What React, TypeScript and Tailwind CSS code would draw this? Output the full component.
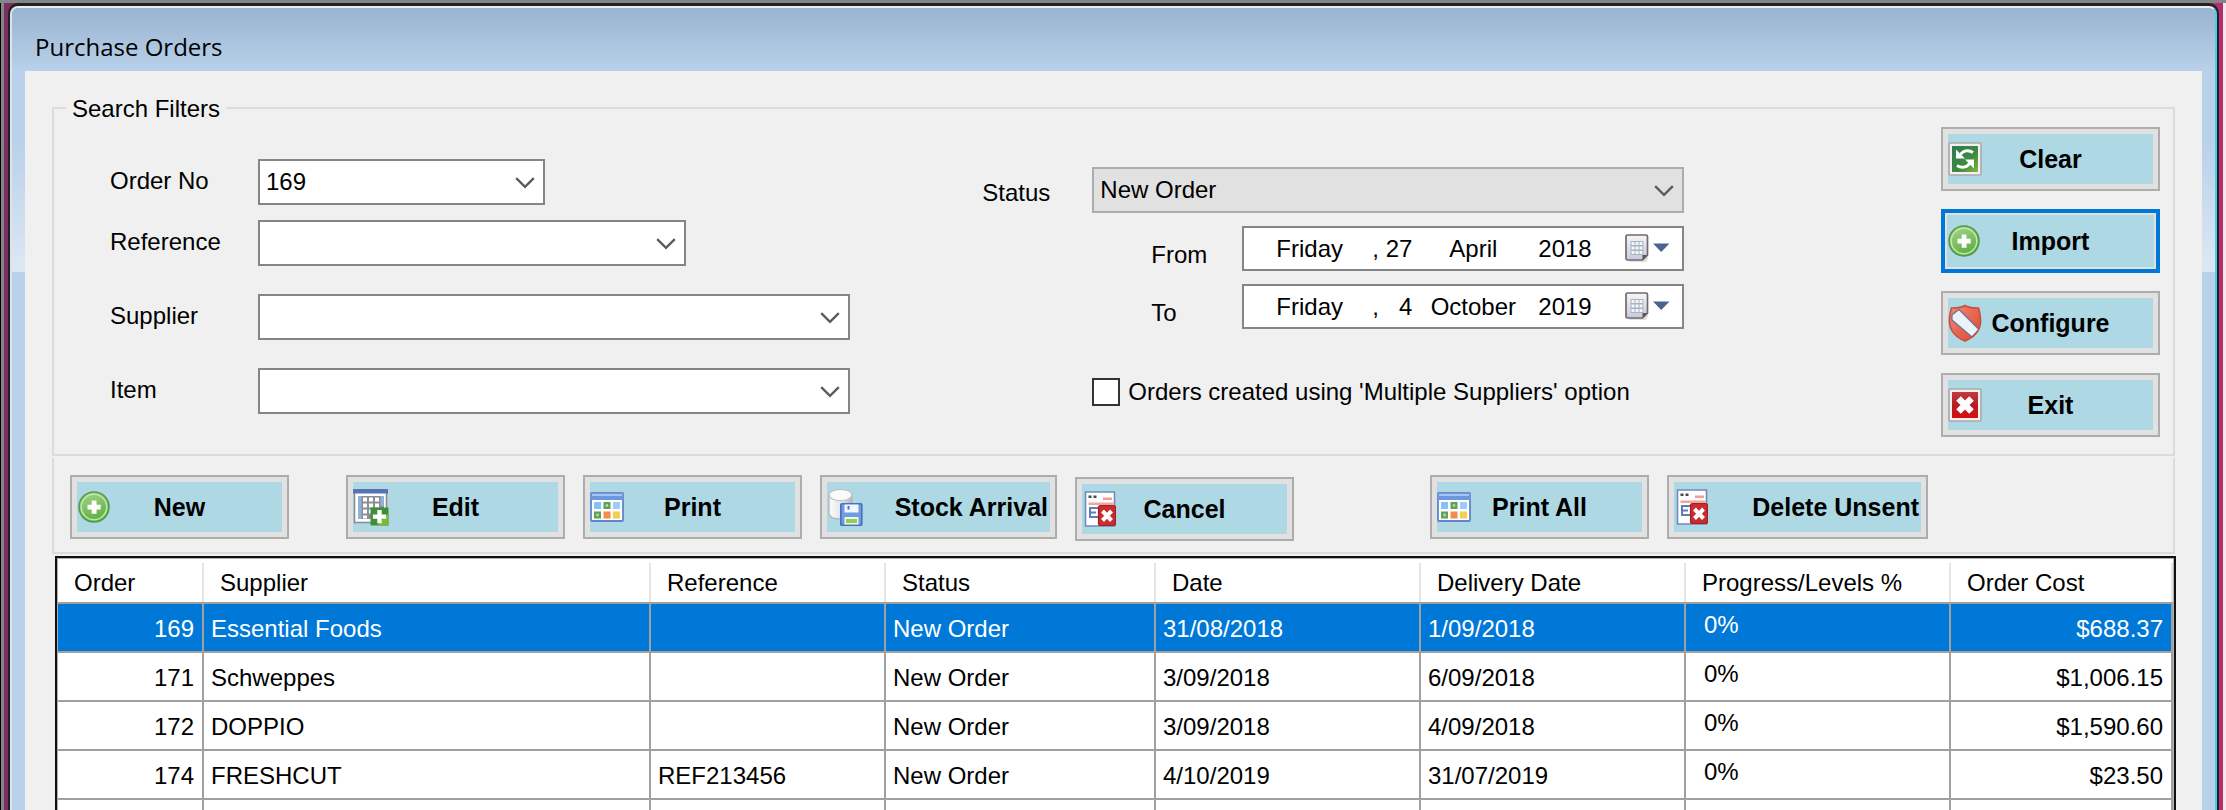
import { useId, type ReactNode } from "react";

/* ---------- icons ---------- */

function Chevron() {
  return (
    <svg width="20" height="12" viewBox="0 0 20 12" fill="none" stroke="#5c5c5c" strokeWidth="2.4" aria-hidden="true">
      <path d="M1.2 1.2 10 9.8 18.8 1.2" />
    </svg>
  );
}

function PlusIcon() {
  return (
    <svg width="34" height="34" viewBox="0 0 34 34" aria-hidden="true">
      <defs>
        <linearGradient id="plusFill" x1="0" y1="0" x2="0.4" y2="1">
          <stop offset="0" stopColor="#a9d68d" />
          <stop offset="1" stopColor="#5fb045" />
        </linearGradient>
      </defs>
      <circle cx="17" cy="17" r="15" fill="url(#plusFill)" stroke="#53994a" strokeWidth="1.5" />
      <circle cx="17" cy="17" r="12.8" fill="none" stroke="#bfe5a8" strokeWidth="1.5" />
      <path d="M14.7 10.5h4.8v4.2h4.2v4.8h-4.2v4.2h-4.8v-4.2h-4.2v-4.8h4.2z" fill="#fff" />
    </svg>
  );
}

function RefreshIcon() {
  return (
    <svg width="34" height="34" viewBox="0 0 34 34" aria-hidden="true">
      <defs>
        <linearGradient id="refreshFill" x1="0" y1="0" x2="1" y2="1">
          <stop offset="0" stopColor="#2f7a50" />
          <stop offset="0.6" stopColor="#3f8a40" />
          <stop offset="1" stopColor="#7fb83c" />
        </linearGradient>
      </defs>
      <rect x="1" y="1" width="32" height="32" rx="1.5" fill="#f1f1f1" stroke="#a9a9a9" strokeWidth="1.6" />
      <rect x="4" y="4" width="26" height="26" fill="url(#refreshFill)" />
      <path d="M12.500 12.500C15 8.500 20.500 7.500 25 10.500" fill="none" stroke="#fff" strokeWidth="3" />
      <path d="M8 7.500v9h9z" fill="#fff" />
      <path d="M21.500 21.500C19 25.500 13.500 26.500 9 23.500" fill="none" stroke="#fff" strokeWidth="3" />
      <path d="M26 26.500v-9h-9z" fill="#fff" />
    </svg>
  );
}

function ShieldIcon() {
  return (
    <svg width="34" height="38" viewBox="0 0 34 38" aria-hidden="true">
      <defs>
        <linearGradient id="shieldFill" x1="0" y1="0" x2="1" y2="1">
          <stop offset="0" stopColor="#f58a78" />
          <stop offset="1" stopColor="#d9452f" />
        </linearGradient>
        <clipPath id="shieldClip">
          <path d="M17 1.500c4 2.600 9 2.600 13.500 2.500 1.500 5 2.500 9 2 15-.6 8-7 15-15.500 18C8.500 34 2.100 27 1.500 19 1 13 2 9 3.500 4 8 4.100 13 4.100 17 1.500z" />
        </clipPath>
      </defs>
      <g clipPath="url(#shieldClip)">
        <rect width="34" height="38" fill="url(#shieldFill)" />
        <path d="M4 16V11L11 5.500 31 25.500 24 33z" fill="#eaf2fa" stroke="#6d6f96" strokeWidth="1.2" />
      </g>
      <path
        d="M17 1.500c4 2.600 9 2.600 13.500 2.500 1.500 5 2.500 9 2 15-.6 8-7 15-15.500 18C8.500 34 2.100 27 1.500 19 1 13 2 9 3.500 4 8 4.100 13 4.100 17 1.500z"
        fill="none"
        stroke="#c4503f"
        strokeWidth="1.5"
      />
    </svg>
  );
}

function ExitIcon() {
  return (
    <svg width="34" height="34" viewBox="0 0 34 34" aria-hidden="true">
      <defs>
        <linearGradient id="exitFill" x1="0" y1="0" x2="0" y2="1">
          <stop offset="0" stopColor="#c23a40" />
          <stop offset="0.5" stopColor="#b51d22" />
          <stop offset="1" stopColor="#d80f10" />
        </linearGradient>
      </defs>
      <rect x="1" y="1" width="32" height="32" rx="1.5" fill="#f1f1f1" stroke="#a9a9a9" strokeWidth="1.6" />
      <rect x="4" y="4" width="26" height="26" fill="url(#exitFill)" />
      <path d="m10.5 10.5 13 13M23.5 10.5l-13 13" stroke="#fff" strokeWidth="6.5" />
    </svg>
  );
}

function GridAddIcon() {
  return (
    <svg width="36" height="38" viewBox="0 0 36 38" aria-hidden="true">
      <rect x="1.5" y="2.5" width="32" height="32" fill="#fff" stroke="#8e8e8e" strokeWidth="1.6" />
      <rect x="0" y="1" width="35" height="4.5" fill="#5573b5" />
      <path d="M5 8h26v23H5z" fill="#8a8f96" />
      <path d="M10 9.500h4v4h-4zM16 9.500h4v4h-4zM22 9.500h4v4h-4zM10 15.500h4v4h-4zM16 15.500h4v4h-4zM22 15.500h4v4h-4zM10 21.500h4v4h-4zM16 21.500h4v4h-4zM10 27.500h4v3h-4z" fill="#fff" />
      <path d="M5 8h3.500v23H5zM27.500 8H31v10h-3.500z" fill="#92b1dc" />
      <rect x="17.5" y="19.5" width="18" height="18" fill="#3f8f3a" />
      <path d="M35.500 25v12.500H24z" fill="#7cb83a" />
      <path d="M24.300 22h4.400v4.400h4.400v4.400h-4.400v4.400h-4.400v-4.400h-4.400v-4.400h4.400z" fill="#fff" />
    </svg>
  );
}

function CalendarTilesIcon() {
  return (
    <svg width="34" height="30" viewBox="0 0 34 30" aria-hidden="true">
      <rect x="1" y="1" width="32" height="28" rx="1" fill="#fdfdfe" stroke="#5f86c6" strokeWidth="1.8" />
      <rect x="0.5" y="0.5" width="33" height="7.5" fill="#6c97da" />
      <rect x="2" y="2" width="30" height="2" fill="#a7c5ef" />
      <path d="M4 10h7v7H4z" fill="#86c0f8" />
      <path d="M13.500 10h7v7h-7z" fill="#5ba257" />
      <path d="M23 10h7v7h-7z" fill="#9bccf8" />
      <path d="M4 19.500h7v7H4z" fill="#5ba257" />
      <path d="M13.500 19.500h7v7h-7z" fill="#f58b4c" />
      <path d="M23 19.500h7v7h-7z" fill="#f2ce55" />
      <path d="M15.800 12.300h2.400v2.400h-2.400zM6.300 21.800h2.400v2.400H6.300z" fill="#b7dcae" />
    </svg>
  );
}

function DatabaseSaveIcon() {
  return (
    <svg width="36" height="38" viewBox="0 0 36 38" aria-hidden="true">
      <defs>
        <linearGradient id="dbFill" x1="0" y1="0" x2="1" y2="0">
          <stop offset="0" stopColor="#fdfdfd" />
          <stop offset="0.55" stopColor="#e3e4e6" />
          <stop offset="1" stopColor="#b2b5ba" />
        </linearGradient>
      </defs>
      <path d="M2 7v18c0 4 5 6 11.500 6S25 29 25 25V7z" fill="url(#dbFill)" stroke="#b4b6ba" strokeWidth="1.3" />
      <ellipse cx="13.5" cy="7" rx="11.5" ry="5.6" fill="#fafafa" stroke="#c0c2c6" strokeWidth="1.3" />
      <rect x="13.8" y="15.800" width="21" height="21.500" rx="1" fill="#6f9be4" stroke="#4670c0" strokeWidth="1.6" />
      <rect x="17.500" y="16.500" width="14" height="8" fill="#f1f5fd" />
      <path d="M20.500 18h2v3.500h-2z" fill="#4670c0" />
      <rect x="17.500" y="29" width="14" height="7.500" fill="#eef7e2" />
      <path d="M19 31h11v4H19z" fill="#93cf4e" />
    </svg>
  );
}

function FormDeleteIcon() {
  return (
    <svg width="34" height="36" viewBox="0 0 34 36" aria-hidden="true">
      <path d="M3.500 1h29v34h-29z" fill="#fff" stroke="#6f8bbd" strokeWidth="1.6" />
      <path d="M6.500 4.500h3V7h-3zM11.500 4.500h3V7h-3z" fill="#4a4a4a" />
      <path d="M21 6.500h9V9h-9z" fill="#f29a94" />
      <path d="M6.500 11.500h25V14h-25z" fill="#f4a39d" />
      <path d="M7 16h2v11H7zM9 16h7v2H9zM9 20.500h5v2H9zM9 25h7v2H9z" fill="#5d7db6" />
      <rect x="16.500" y="14.500" width="17" height="20" rx="2" fill="#c92c2e" stroke="#a31f23" strokeWidth="1.2" />
      <path d="m20.500 20 9 9.500M29.500 20l-9 9.500" stroke="#fff" strokeWidth="4" />
    </svg>
  );
}

function DatePickerIcon() {
  return (
    <svg width="46" height="32" viewBox="0 0 46 32" aria-hidden="true">
      <defs>
        <linearGradient id="pageFill" x1="0" y1="0" x2="0" y2="1">
          <stop offset="0" stopColor="#f7f6f8" />
          <stop offset="1" stopColor="#c3cbe0" />
        </linearGradient>
      </defs>
      <path d="M5 29h17l2-3v-3H5z" fill="#000" opacity="0.12" />
      <path d="M3.500 2H22q1.500 0 1.500 1.500V22l-5 5h-15Q2 27 2 25.500v-22Q2 2 3.500 2z" fill="url(#pageFill)" stroke="#75686a" strokeWidth="1.7" />
      <path d="M6.500 8h13v14h-13z" fill="#aab2c0" />
      <path d="M7.500 9h3v3h-3zM11.500 9h3v3h-3zM15.500 9h3v3h-3zM7.500 13.500h3v3h-3zM11.500 13.500h3v3h-3zM15.500 13.500h3v3h-3zM7.500 18h3v3h-3zM11.500 18h3v3h-3zM15.500 18h3v3h-3z" fill="#f3f6fb" />
      <path d="M18.500 27v-5h5z" fill="#5d5556" />
      <path d="M29 10.500h16.500L37.200 19z" fill="#4a6491" />
    </svg>
  );
}

/* ---------- controls ---------- */

const TEXT = "font-['Liberation_Sans',Arial,sans-serif] text-[24px] leading-8";

function ActionButton({
  icon,
  children,
  width = "w-[219px]",
  align = "justify-self-center",
  focused = false,
}: {
  icon: ReactNode;
  children: ReactNode;
  width?: string;
  align?: string;
  focused?: boolean;
}) {
  return (
    <button
      type="button"
      className={`h-16 shrink-0 bg-[#e1e1e1] ${width} ${
        focused ? "border-4 border-[#0078d7] p-[2px]" : "border-2 border-[#adadad] p-[5px]"
      }`}
    >
      <span className="grid h-full grid-cols-1 items-center bg-[#add8e4]">
        <span className="col-start-1 row-start-1 justify-self-start">{icon}</span>
        <span className={`col-start-1 row-start-1 whitespace-nowrap text-[25px] leading-7 font-bold ${align}`}>
          {children}
        </span>
      </span>
    </button>
  );
}

function Combo({
  id,
  value,
  width,
  disabledLook = false,
}: {
  id: string;
  value: string;
  width: string;
  disabledLook?: boolean;
}) {
  return (
    <div className={`relative h-[46px] ${width}`}>
      <select
        id={id}
        defaultValue={value}
        className={`size-full appearance-none border-2 px-[6px] ${TEXT} ${
          disabledLook ? "border-[#adadad] bg-[#e1e1e1]" : "border-[#858585] bg-white"
        }`}
      >
        <option>{value}</option>
      </select>
      <span className="pointer-events-none absolute top-[18px] right-[10px]">
        <Chevron />
      </span>
    </div>
  );
}

function FilterRow({ label, value = "", width }: { label: string; value?: string; width: string }) {
  const id = useId();
  return (
    <div className="flex items-center">
      <label htmlFor={id} className="w-[148px] pb-[2px]">
        {label}
      </label>
      <Combo id={id} value={value} width={width} />
    </div>
  );
}

function DateRow({ label, day, month, year }: { label: string; day: string; month: string; year: string }) {
  const id = useId();
  return (
    <div className="flex items-center justify-end">
      <label htmlFor={id} className="w-[91px] pt-3">
        {label}
      </label>
      <div className="flex h-[45px] w-[442px] items-center border-2 border-[#858585] bg-white pl-8">
        <input aria-label={`${label} weekday`} defaultValue="Friday" className="w-24 bg-transparent" />
        <span className="w-2">,</span>
        <input id={id} defaultValue={day} className="w-8 bg-transparent text-right" />
        <input aria-label={`${label} month`} defaultValue={month} className="w-[122px] bg-transparent text-center" />
        <input aria-label={`${label} year`} defaultValue={year} className="ml-1 w-[60px] bg-transparent" />
        <button type="button" aria-label={`Open ${label} calendar`} className="ml-auto pr-3">
          <DatePickerIcon />
        </button>
      </div>
    </div>
  );
}

/* ---------- data ---------- */

const columns = [
  { title: "Order", width: "w-[146px]" },
  { title: "Supplier", width: "w-[447px]" },
  { title: "Reference", width: "w-[235px]" },
  { title: "Status", width: "w-[270px]" },
  { title: "Date", width: "w-[265px]" },
  { title: "Delivery Date", width: "w-[265px]" },
  { title: "Progress/Levels %", width: "w-[265px]" },
  { title: "Order Cost", width: "" },
];

const orders = [
  ["169", "Essential Foods", "", "New Order", "31/08/2018", "1/09/2018", "0%", "$688.37"],
  ["171", "Schweppes", "", "New Order", "3/09/2018", "6/09/2018", "0%", "$1,006.15"],
  ["172", "DOPPIO", "", "New Order", "3/09/2018", "4/09/2018", "0%", "$1,590.60"],
  ["174", "FRESHCUT", "REF213456", "New Order", "4/10/2019", "31/07/2019", "0%", "$23.50"],
  ["", "", "", "", "", "", "0%", ""],
];

function cellClass(column: number) {
  if (column === 0) return "pt-[2px] pr-2 text-right";
  if (column === 7) return "pt-[2px] pr-2 text-right";
  if (column === 6) return "pb-[6px] pl-[18px]";
  return "pt-[2px] pl-[7px]";
}

function OrdersTable() {
  return (
    <div className="mt-[2px] mr-[26px] ml-[30px] border-2 border-[#111]">
      <div className="border border-[#b0b0b0] bg-white">
        <table className="w-full table-fixed border-separate border-spacing-0">
          <thead>
            <tr>
              {columns.map((column) => (
                <th
                  key={column.title}
                  className={`h-[45px] border-b-2 border-[#a0a0a0] p-0 text-left font-normal whitespace-nowrap ${column.width}`}
                >
                  <div className="mt-1 flex h-[39px] items-center border-r-2 border-[#e5e5e5] pl-4">
                    {column.title}
                  </div>
                </th>
              ))}
            </tr>
          </thead>
          <tbody>
            {orders.map((order, row) => (
              <tr key={row} className={row === 0 ? "bg-[#0078d7] text-white" : "bg-white"}>
                {order.map((value, column) => (
                  <td
                    key={column}
                    className={`h-[49px] border-r-2 border-b-2 border-[#a0a0a0] whitespace-nowrap ${cellClass(column)}`}
                  >
                    {value}
                  </td>
                ))}
              </tr>
            ))}
          </tbody>
        </table>
      </div>
    </div>
  );
}

/* ---------- window ---------- */

function SideFrame() {
  return (
    <div className="flex w-[13px] shrink-0 flex-col bg-[#b9d1ea]">
      <div className="h-[201px] bg-linear-to-b from-[#b9d1ea] from-35% to-[#dde8f4]" />
    </div>
  );
}

export default function App() {
  const statusId = useId();
  const multipleId = useId();
  return (
    <div className={`flex h-screen flex-col overflow-hidden bg-[#858585] text-black ${TEXT}`}>
      <div className="h-[3px] shrink-0" />
      <div className="flex min-h-0 flex-1">
        <div className="w-px bg-black" />
        <div className="w-[3px] bg-[#858585]" />
        <div className="flex min-w-0 flex-1 bg-linear-to-r from-[#7a2f66] from-50% to-[#b82d6c] to-50% px-1">
          <div className="flex min-w-0 flex-1 rounded-t-[10px] border-x-2 border-t-[3px] border-[#222] bg-[#222]">
            <div className="flex min-w-0 flex-1 flex-col overflow-hidden rounded-t-[8px] border-t-2 border-r-2 border-l-2 border-t-[#e8eef5] border-r-[#45cfe8] border-l-[#dfe3e8] bg-[#b9d1ea]">
              <header className="flex h-[63px] shrink-0 items-center bg-linear-to-b from-[#99b4d1] to-[#b9d1ea] px-[23px] pt-[14px]">
                <h1 className="font-['Open_Sans','Noto_Sans',sans-serif] text-[24px] leading-8">Purchase Orders</h1>
              </header>
              <div className="flex min-h-0 flex-1">
                <SideFrame />
                <main className="min-w-0 flex-1 overflow-hidden bg-[#f0f0f0] pt-[23px]">
                  <fieldset className="mx-[27px] border-2 border-[#dcdcdc] pb-[17px]">
                    <legend className="ml-3 h-7 px-[6px] leading-[30px]">Search Filters</legend>
                    <div className="grid grid-cols-[744px_1fr_702px_2fr_219px] pt-[5px] pr-[13px] pl-14">
                      <div className="flex flex-col pt-8">
                        <FilterRow label="Order No" value="169" width="w-[287px]" />
                        <div className="mt-[15px]">
                          <FilterRow label="Reference" width="w-[428px]" />
                        </div>
                        <div className="mt-7">
                          <FilterRow label="Supplier" width="w-[592px]" />
                        </div>
                        <div className="mt-7">
                          <FilterRow label="Item" width="w-[592px]" />
                        </div>
                      </div>
                      <div className="col-start-3 flex flex-col gap-[13px] pt-10">
                        <div className="flex items-center justify-between">
                          <label htmlFor={statusId} className="pt-[6px]">
                            Status
                          </label>
                          <Combo id={statusId} value="New Order" width="w-[592px]" disabledLook />
                        </div>
                        <DateRow label="From" day="27" month="April" year="2018" />
                        <DateRow label="To" day="4" month="October" year="2019" />
                        <div className="mt-[34px] flex items-center gap-2 pl-[110px]">
                          <input
                            id={multipleId}
                            type="checkbox"
                            className="size-7 shrink-0 appearance-none border-2 border-[#333] bg-white"
                          />
                          <label htmlFor={multipleId} className="whitespace-nowrap">
                            Orders created using 'Multiple Suppliers' option
                          </label>
                        </div>
                      </div>
                      <div className="col-start-5 flex flex-col gap-[18px]">
                        <ActionButton icon={<RefreshIcon />}>Clear</ActionButton>
                        <ActionButton icon={<PlusIcon />} focused>
                          Import
                        </ActionButton>
                        <ActionButton icon={<ShieldIcon />}>Configure</ActionButton>
                        <ActionButton icon={<ExitIcon />}>Exit</ActionButton>
                      </div>
                    </div>
                  </fieldset>

                  <div className="mx-[27px] mt-[2px] flex h-24 gap-[18px] border-x-2 border-b-2 border-[#dcdcdc] pt-[17px] pl-4">
                    <ActionButton icon={<PlusIcon />}>New</ActionButton>
                    <div className="flex gap-[18px] pl-[39px]">
                      <ActionButton icon={<GridAddIcon />}>Edit</ActionButton>
                      <ActionButton icon={<CalendarTilesIcon />}>Print</ActionButton>
                      <ActionButton icon={<DatabaseSaveIcon />} width="w-[237px]" align="justify-self-end pr-[2px]">
                        Stock Arrival
                      </ActionButton>
                      <div className="pt-[2px]">
                        <ActionButton icon={<FormDeleteIcon />}>Cancel</ActionButton>
                      </div>
                    </div>
                    <div className="flex gap-[18px] pl-[118px]">
                      <ActionButton icon={<CalendarTilesIcon />}>Print All</ActionButton>
                      <ActionButton icon={<FormDeleteIcon />} width="w-[261px]" align="justify-self-end pr-[2px]">
                        Delete Unsent
                      </ActionButton>
                    </div>
                  </div>

                  <OrdersTable />
                </main>
                <SideFrame />
              </div>
            </div>
          </div>
        </div>
        <div className="w-[3px] bg-[#f3e6ee]" />
      </div>
    </div>
  );
}
